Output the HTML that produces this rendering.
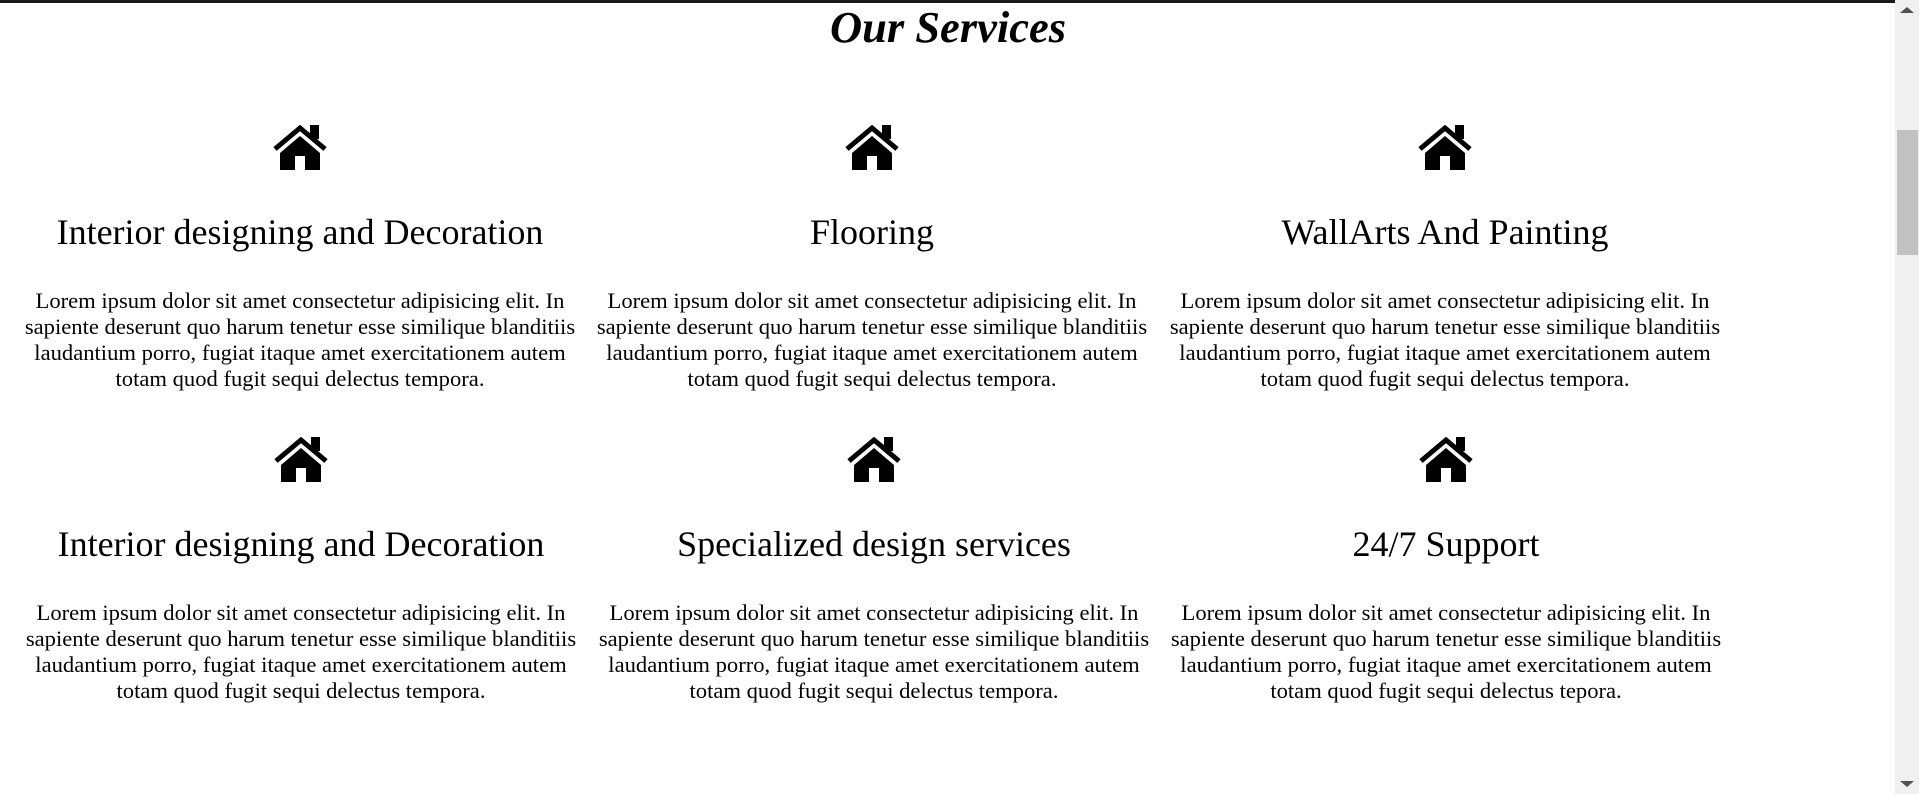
<!DOCTYPE html>
<html><head><meta charset="utf-8"><style>
html,body{margin:0;padding:0;width:1919px;height:794px;overflow:hidden;background:#fff;font-family:"Liberation Serif",serif;color:#000}
.top{position:absolute;left:0;top:0;width:1895px;height:3px;background:#1a1a1a}
h1{position:absolute;left:0;width:1896px;top:2px;margin:0;font-size:44.5px;line-height:50px;font-style:italic;font-weight:bold;text-align:center}
.c{position:absolute;width:572px;text-align:center}
.c svg{position:absolute;left:259px;top:0}
.c h2{position:absolute;left:0;width:572px;top:86px;margin:0;font-size:36px;line-height:42px;font-weight:normal}
.c p{position:absolute;left:-4px;width:580px;top:163px;margin:0;font-size:22.6px;line-height:26px}
.sb{position:absolute;left:1895px;top:0;width:24px;height:794px;background:#f0f0f0}
.th{position:absolute;left:1897px;top:130px;width:21px;height:125px;background:#c1c1c1}
</style></head><body>
<div class="top"></div>
<h1>Our Services</h1>

<div class="c" style="left:14px;top:125px">
<svg width="54" height="45" viewBox="0 0 54 45"><polyline points="2,24 27,3 52,24" fill="none" stroke="#000" stroke-width="5"/><rect x="37" y="0" width="9" height="14"/><polygon points="7,28 27,11 47,28 47,45 32,45 32,31 22,31 22,45 7,45"/></svg>
<h2>Interior designing and Decoration</h2>
<p>Lorem ipsum dolor sit amet consectetur adipisicing elit. In sapiente deserunt quo harum tenetur esse similique blanditiis laudantium porro, fugiat itaque amet exercitationem autem totam quod fugit sequi delectus tempora.</p>
</div>
<div class="c" style="left:586px;top:125px">
<svg width="54" height="45" viewBox="0 0 54 45"><polyline points="2,24 27,3 52,24" fill="none" stroke="#000" stroke-width="5"/><rect x="37" y="0" width="9" height="14"/><polygon points="7,28 27,11 47,28 47,45 32,45 32,31 22,31 22,45 7,45"/></svg>
<h2>Flooring</h2>
<p>Lorem ipsum dolor sit amet consectetur adipisicing elit. In sapiente deserunt quo harum tenetur esse similique blanditiis laudantium porro, fugiat itaque amet exercitationem autem totam quod fugit sequi delectus tempora.</p>
</div>
<div class="c" style="left:1159px;top:125px">
<svg width="54" height="45" viewBox="0 0 54 45"><polyline points="2,24 27,3 52,24" fill="none" stroke="#000" stroke-width="5"/><rect x="37" y="0" width="9" height="14"/><polygon points="7,28 27,11 47,28 47,45 32,45 32,31 22,31 22,45 7,45"/></svg>
<h2>WallArts And Painting</h2>
<p>Lorem ipsum dolor sit amet consectetur adipisicing elit. In sapiente deserunt quo harum tenetur esse similique blanditiis laudantium porro, fugiat itaque amet exercitationem autem totam quod fugit sequi delectus tempora.</p>
</div>

<div class="c" style="left:15px;top:437px">
<svg width="54" height="45" viewBox="0 0 54 45"><polyline points="2,24 27,3 52,24" fill="none" stroke="#000" stroke-width="5"/><rect x="37" y="0" width="9" height="14"/><polygon points="7,28 27,11 47,28 47,45 32,45 32,31 22,31 22,45 7,45"/></svg>
<h2>Interior designing and Decoration</h2>
<p>Lorem ipsum dolor sit amet consectetur adipisicing elit. In sapiente deserunt quo harum tenetur esse similique blanditiis laudantium porro, fugiat itaque amet exercitationem autem totam quod fugit sequi delectus tempora.</p>
</div>
<div class="c" style="left:588px;top:437px">
<svg width="54" height="45" viewBox="0 0 54 45"><polyline points="2,24 27,3 52,24" fill="none" stroke="#000" stroke-width="5"/><rect x="37" y="0" width="9" height="14"/><polygon points="7,28 27,11 47,28 47,45 32,45 32,31 22,31 22,45 7,45"/></svg>
<h2>Specialized design services</h2>
<p>Lorem ipsum dolor sit amet consectetur adipisicing elit. In sapiente deserunt quo harum tenetur esse similique blanditiis laudantium porro, fugiat itaque amet exercitationem autem totam quod fugit sequi delectus tempora.</p>
</div>
<div class="c" style="left:1160px;top:437px">
<svg width="54" height="45" viewBox="0 0 54 45"><polyline points="2,24 27,3 52,24" fill="none" stroke="#000" stroke-width="5"/><rect x="37" y="0" width="9" height="14"/><polygon points="7,28 27,11 47,28 47,45 32,45 32,31 22,31 22,45 7,45"/></svg>
<h2>24/7 Support</h2>
<p>Lorem ipsum dolor sit amet consectetur adipisicing elit. In sapiente deserunt quo harum tenetur esse similique blanditiis laudantium porro, fugiat itaque amet exercitationem autem totam quod fugit sequi delectus tepora.</p>
</div>

<div class="sb"></div>
<div class="th"></div>
<svg style="position:absolute;left:1900px;top:6px" width="14" height="8"><polygon points="0,7 7,1 14,7" fill="#505050"/></svg>
<svg style="position:absolute;left:1900px;top:780px" width="14" height="8"><polygon points="0,1 7,7 14,1" fill="#505050"/></svg>
</body></html>
